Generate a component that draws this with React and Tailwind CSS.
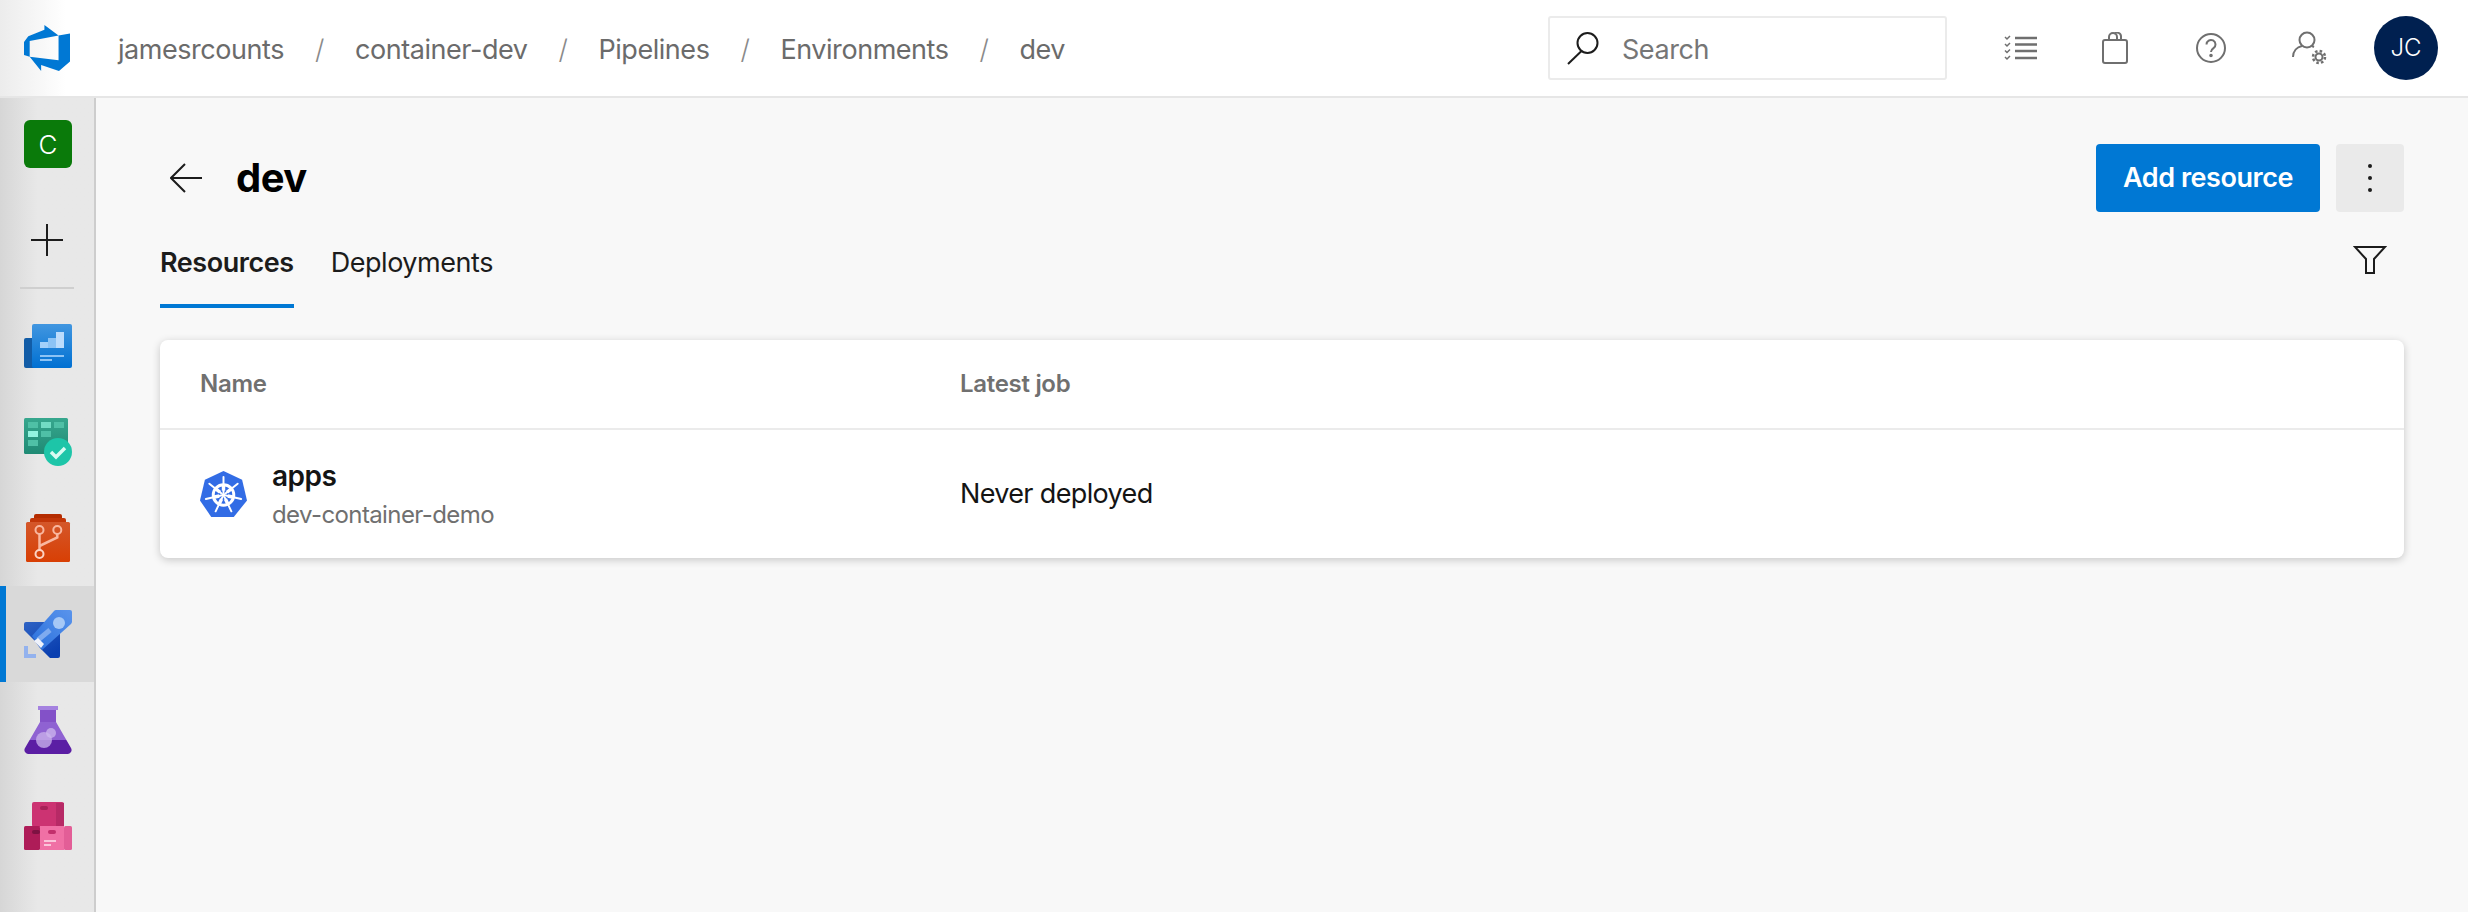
const crumbs = ["jamesrcounts", "container-dev", "Pipelines", "Environments", "dev"];

function Logo() {
  return (
    <svg width="46" height="46" viewBox="0 0 24 24" fill="#0078d4">
      <path d="M0 8.877L2.247 5.91l8.405-3.416V.022l7.37 5.393L2.966 8.338v8.225L0 15.707zm24-4.45v14.651l-5.753 4.9-9.303-3.057v3.056l-5.978-7.416 15.057 1.798V5.415z" />
    </svg>
  );
}

function OverviewIcon() {
  return (
    <svg width="48" height="48" viewBox="0 0 48 48">
      <defs>
        <linearGradient id="ov" x1="0" y1="0" x2="0" y2="1">
          <stop offset="0" stopColor="#4196e0" />
          <stop offset="1" stopColor="#0070d2" />
        </linearGradient>
      </defs>
      <rect x="0" y="16" width="14" height="30" rx="2" fill="#125ca6" />
      <rect x="8" y="2" width="40" height="44" rx="2" fill="url(#ov)" />
      <rect x="16" y="20" width="8" height="6" fill="#a3d0fa" />
      <rect x="24" y="16" width="8" height="10" fill="#8cc3f5" />
      <rect x="32" y="10" width="8" height="16" fill="#bcdcfc" />
      <rect x="16" y="33" width="24" height="2" fill="#8cc3f5" />
      <rect x="16" y="37" width="12" height="2" fill="#8cc3f5" />
    </svg>
  );
}

function BoardsIcon() {
  return (
    <svg width="48" height="48" viewBox="0 0 48 48">
      <defs>
        <linearGradient id="bd" x1="0" y1="0" x2="0" y2="1">
          <stop offset="0" stopColor="#37a78e" />
          <stop offset="1" stopColor="#1f8a74" />
        </linearGradient>
      </defs>
      <rect x="0" y="0" width="44" height="36" rx="1.5" fill="url(#bd)" />
      <rect x="4" y="4" width="10" height="6" fill="#4fc0a6" />
      <rect x="17" y="4" width="10" height="6" fill="#72dcc4" />
      <rect x="30" y="4" width="10" height="6" fill="#4fc0a6" />
      <rect x="4" y="13" width="10" height="6" fill="#93f3df" />
      <rect x="17" y="13" width="10" height="6" fill="#4fc0a6" />
      <rect x="4" y="22" width="10" height="6" fill="#4fc0a6" />
      <circle cx="34" cy="34" r="14" fill="#1dc5a8" />
      <path d="M27 34l5 5 9-9" fill="none" stroke="#d8fbf2" strokeWidth="3.5" />
    </svg>
  );
}

function ReposIcon() {
  return (
    <svg width="48" height="48" viewBox="0 0 48 48">
      <defs>
        <linearGradient id="rp" x1="0" y1="0" x2="0" y2="1">
          <stop offset="0" stopColor="#d4572a" />
          <stop offset="1" stopColor="#d83f04" />
        </linearGradient>
      </defs>
      <rect x="10" y="0" width="28" height="10" rx="2" fill="#b42c00" />
      <rect x="6" y="4" width="36" height="10" rx="2" fill="#c23608" />
      <rect x="2" y="8" width="44" height="40" rx="1.5" fill="url(#rp)" />
      <path d="M15.5 20v16M33.3 20v3.5L15.5 32" fill="none" stroke="#f9b79f" strokeWidth="2.5" />
      <circle cx="15.5" cy="16" r="4" fill="none" stroke="#f9b79f" strokeWidth="2" />
      <circle cx="33.3" cy="16" r="4" fill="none" stroke="#f9b79f" strokeWidth="2" />
      <circle cx="15.5" cy="40" r="4" fill="none" stroke="#fcd3c3" strokeWidth="2" />
    </svg>
  );
}

function PipelinesIcon() {
  return (
    <svg width="48" height="48" viewBox="0 0 48 48">
      <defs>
        <linearGradient id="pl" x1="0" y1="0" x2="0.6" y2="1">
          <stop offset="0" stopColor="#2f63c4" />
          <stop offset="1" stopColor="#0a3fb0" />
        </linearGradient>
        <linearGradient id="pb" x1="1" y1="0" x2="0" y2="1">
          <stop offset="0" stopColor="#5a94ec" />
          <stop offset="1" stopColor="#2a70dc" />
        </linearGradient>
      </defs>
      <path d="M2 12h34v34a2 2 0 0 1-2 2H26L16 38 10 30 0 20V14a2 2 0 0 1 2-2z" fill="url(#pl)" />
      <path d="M32 0h14a2 2 0 0 1 2 2v10a4 4 0 0 1-1 2L18 40 8 26 30 1a3 3 0 0 1 2-1z" fill="url(#pb)" />
      <circle cx="35" cy="13" r="6" fill="#a6c8f6" />
      <path d="M14 30L26 20" stroke="#7fabef" strokeWidth="5" />
      <path d="M10 31l4-3 6 6-3 4z" fill="#eef2fb" />
      <path d="M0 36h4v8h8v4H0z" fill="#93b2ee" />
    </svg>
  );
}

function TestIcon() {
  return (
    <svg width="48" height="48" viewBox="0 0 48 48">
      <defs>
        <clipPath id="fl">
          <path d="M16 4h16v12l15 26a4 4 0 0 1-3 6H4a4 4 0 0 1-3-6l15-26z" />
        </clipPath>
      </defs>
      <g clipPath="url(#fl)">
        <rect x="0" y="0" width="48" height="34" fill="#8f62d2" />
        <rect x="0" y="4" width="48" height="12" fill="#8351c8" />
        <rect x="0" y="34" width="48" height="14" fill="#5b1ea4" />
        <circle cx="20" cy="34" r="8" fill="#c7aeea" fillOpacity="0.8" />
        <circle cx="27" cy="27" r="5" fill="#cdb8ee" fillOpacity="0.75" />
      </g>
      <rect x="14" y="0" width="20" height="4" fill="#a582e0" />
    </svg>
  );
}

function ArtifactsIcon() {
  return (
    <svg width="48" height="48" viewBox="0 0 48 48">
      <rect x="8" y="0" width="32" height="25" rx="2" fill="#cc3372" />
      <rect x="32" y="1" width="8" height="24" fill="#b72a66" />
      <rect x="16" y="4" width="8" height="4" rx="2" fill="#a82259" />
      <rect x="0" y="24" width="16" height="24" rx="1.5" fill="#ae1c58" />
      <rect x="16" y="24" width="24" height="24" fill="#f070a5" />
      <rect x="40" y="24" width="8" height="24" rx="1.5" fill="#e35e97" />
      <rect x="8" y="28" width="8" height="4" rx="2" fill="#7d1242" />
      <rect x="24" y="28" width="8" height="4" rx="2" fill="#c2306c" />
      <rect x="20" y="38" width="12" height="2" fill="#fbc4da" />
      <rect x="20" y="42" width="7" height="2" fill="#fbc4da" />
    </svg>
  );
}

function KubeIcon() {
  const spokes = [0, 51.4, 102.9, 154.3, 205.7, 257.1, 308.6];
  return (
    <svg width="47" height="47" viewBox="0 0 48 48">
      <path d="M24 0l19 9 5 21-13.500 17h-23L0 30 5 9z" fill="#326ce5" />
      <circle cx="24" cy="24.500" r="10.500" fill="none" stroke="#fff" strokeWidth="3" />
      <circle cx="24" cy="24.500" r="2" fill="#fff" />
      {spokes.map((a) => (
        <g key={a} transform={`rotate(${a} 24 24.500)`}>
          <path d="M24 22V6" stroke="#fff" strokeWidth="2" strokeLinecap="round" />
          <path d="M24 20v-6" stroke="#fff" strokeWidth="3.500" />
        </g>
      ))}
    </svg>
  );
}

function SideItem({ active, children }) {
  return (
    <div className={`relative h-[96px] pl-[2px] flex items-center justify-center ${active ? "bg-[#d9d9d9]" : ""}`}>
      {active && <div className="absolute left-0 top-0 bottom-0 w-[6px] bg-[#0078d4]" />}
      {children}
    </div>
  );
}

function Sidebar() {
  return (
    <aside className="w-[96px] shrink-0 border-r-2 border-[#cdcdcd] bg-gradient-to-r from-[#d6d6d6] to-[#e8e8e8] to-40%">
      <div className="flex justify-center pt-[22px] pl-[2px]">
        <div className="w-[48px] h-[48px] rounded-[6px] bg-[#0a7a0a] text-white flex items-center justify-center text-[26px] font-light">C</div>
      </div>
      <div className="flex justify-center mt-[56px]">
        <svg width="32" height="32" viewBox="0 0 32 32" stroke="#1c1c1c" strokeWidth="2">
          <path d="M16 0v32M0 16h32" />
        </svg>
      </div>
      <div className="h-[2px] bg-[#cfcfcf] mx-[20px] mt-[31px] mb-[9px]" />
      <SideItem><OverviewIcon /></SideItem>
      <SideItem><BoardsIcon /></SideItem>
      <SideItem><ReposIcon /></SideItem>
      <SideItem active><PipelinesIcon /></SideItem>
      <SideItem><TestIcon /></SideItem>
      <SideItem><ArtifactsIcon /></SideItem>
    </aside>
  );
}

function TopBar() {
  return (
    <header className="h-[98px] shrink-0 flex items-center bg-white border-b-2 border-[#e6e6e6]">
      <div className="w-[94px] h-full flex items-center justify-center bg-gradient-to-r from-[#ececec] to-white to-70%">
        <Logo />
      </div>
      <nav className="ml-[24px] pt-[4px] flex items-center gap-[31px] text-[27px] tracking-[-0.45px] text-[#6b6b6b]">
        {crumbs.map((c, i) => (
          <div key={c} className="flex items-center gap-[31px]">
            <span>{c}</span>
            {i < crumbs.length - 1 && <span className="text-[#8a8a8a] font-light">/</span>}
          </div>
        ))}
      </nav>
      <div className="ml-auto w-[399px] h-[64px] flex items-center rounded-[3px] border-2 border-[#ebebeb] pl-[16px] gap-[22px] text-[27px] tracking-[-0.45px] text-[#767676]">
        <svg width="34" height="34" viewBox="0 0 34 34" fill="none" stroke="#1c1c1c" strokeWidth="2">
          <circle cx="21.500" cy="12" r="10" />
          <path d="M15.500 20L2 33" />
        </svg>
        <span className="pt-[4px]">Search</span>
      </div>
      <div className="flex items-center ml-[57px] mr-[30px]">
        <svg width="34" height="26" viewBox="0 0 34 26" fill="none" stroke="#6f6f6f" strokeWidth="2.500">
          <path d="M11 3h22M11 9.500h22M11 16h22M11 23h22" />
          <path d="M1 2l2 2 3-3M1 9l2 2 3-3M1 15.500l2 2 3-3M1 22l2 2 3-3" strokeWidth="1.500" />
        </svg>
        <svg width="26" height="32" viewBox="0 0 26 32" fill="none" stroke="#6f6f6f" strokeWidth="2" className="ml-[64px]">
          <rect x="1" y="8" width="24" height="23" rx="2" />
          <path d="M7 8V5a4 4 0 0 1 8 0v3M12 2a4 4 0 0 1 7 3v3" />
        </svg>
        <svg width="30" height="30" viewBox="0 0 30 30" fill="none" stroke="#6f6f6f" strokeWidth="2" className="ml-[68px]">
          <circle cx="15" cy="15" r="14" />
          <path d="M10.500 11.500a4.500 4.500 0 1 1 7 3.700c-1.500 1-2.500 1.800-2.500 3.800" />
          <circle cx="15" cy="22.500" r="0.800" fill="#6f6f6f" />
        </svg>
        <svg width="36" height="34" viewBox="0 0 36 34" fill="none" stroke="#6f6f6f" strokeWidth="2" className="ml-[66px]">
          <circle cx="15" cy="9" r="7.500" />
          <path d="M1 26c0-6 4-10 9-11M20 15l2 1" />
          <circle cx="27" cy="26" r="3.500" strokeWidth="2" />
          <circle cx="27" cy="26" r="6" strokeWidth="2.500" strokeDasharray="2.500 2.200" />
        </svg>
        <div className="w-[64px] h-[64px] ml-[46px] rounded-full bg-[#002050] text-white flex items-center justify-center text-[24px] font-light">JC</div>
      </div>
    </header>
  );
}

function Header() {
  return (
    <>
      <div className="flex items-center justify-between">
        <div className="flex items-center pl-[10px]">
          <svg width="32" height="30" viewBox="0 0 32 30" fill="none" stroke="#1c1c1c" strokeWidth="2">
            <path d="M32 15H1M15 1L1 15l14 14" />
          </svg>
          <h1 className="ml-[34px] text-[40px] tracking-[-0.5px] font-bold text-black leading-[48px]">dev</h1>
        </div>
        <div className="flex items-center gap-[16px]">
          <button className="w-[224px] h-[68px] rounded-[4px] bg-[#0078d4] text-white text-[27px] tracking-[-0.45px] font-semibold">Add resource</button>
          <button className="w-[68px] h-[68px] rounded-[4px] bg-[#eaeaea] flex flex-col items-center justify-center gap-[8px]">
            <span className="w-[4px] h-[4px] rounded-full bg-[#1c1c1c]" />
            <span className="w-[4px] h-[4px] rounded-full bg-[#1c1c1c]" />
            <span className="w-[4px] h-[4px] rounded-full bg-[#1c1c1c]" />
          </button>
        </div>
      </div>
      <div className="flex justify-between mb-[32px]">
        <div className="flex gap-[37px] text-[27px] tracking-[-0.45px] leading-[36px] text-[#1c1c1c]">
          <div className="pt-[33px] pb-[23px] border-b-4 border-[#0078d4] font-semibold">Resources</div>
          <div className="pt-[33px] pb-[23px] border-b-4 border-transparent">Deployments</div>
        </div>
        <svg width="34" height="30" viewBox="0 0 34 30" fill="none" stroke="#1c1c1c" strokeWidth="2" className="mt-[33px] mr-[17px]">
          <path d="M2 2h30L21 14v14h-8V14z" />
        </svg>
      </div>
    </>
  );
}

function ResourceTable() {
  return (
    <div className="bg-white rounded-[8px] shadow-[0_2px_8px_rgba(0,0,0,0.2)]">
      <div className="h-[90px] flex items-center border-b-2 border-[#ebebeb] px-[40px] text-[24px] tracking-[-0.3px] font-semibold text-[#707070]">
        <div className="w-[760px]">Name</div>
        <div>Latest job</div>
      </div>
      <div className="h-[128px] flex items-center px-[40px]">
        <div className="w-[760px] flex items-center gap-[25px]">
          <KubeIcon />
          <div>
            <div className="text-[28px] tracking-[-0.5px] leading-[36px] font-semibold text-[#141414]">apps</div>
            <div className="text-[24px] tracking-[-0.6px] leading-[32px] mt-[5px] text-[#707070]">dev-container-demo</div>
          </div>
        </div>
        <div className="text-[27px] tracking-[-0.65px] text-[#141414]">Never deployed</div>
      </div>
    </div>
  );
}

export default function App() {
  return (
    <div className="h-screen flex flex-col overflow-hidden bg-[#f8f8f8] font-['Inter',sans-serif]">
      <TopBar />
      <div className="flex flex-1 min-h-0">
        <Sidebar />
        <main className="flex-1 px-[64px] pt-[46px]">
          <Header />
          <ResourceTable />
        </main>
      </div>
    </div>
  );
}
